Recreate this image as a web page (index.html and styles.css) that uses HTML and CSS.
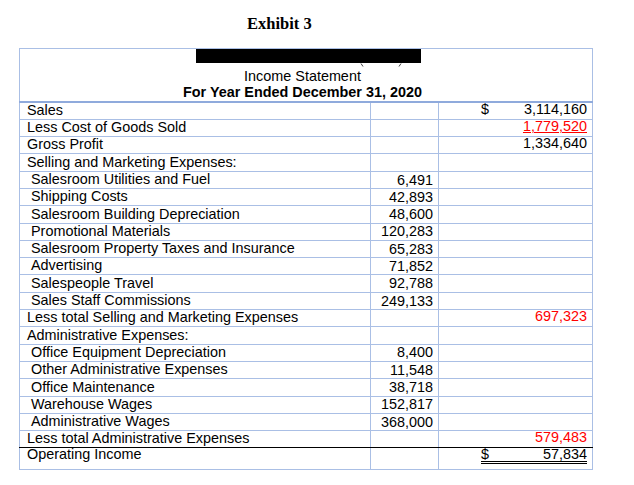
FILE: index.html
```html
<!DOCTYPE html>
<html lang="en">
<head>
<meta charset="utf-8">
<title>Exhibit 3</title>
<link rel="stylesheet" href="styles.css">
</head>
<body>
<h1 class="exhibit">Exhibit 3</h1>
<table class="sheet">
  <colgroup><col class="c1"><col class="c2"><col class="c3"></colgroup>
  <tr class="head">
    <td colspan="3">
      <div class="redact"></div>
      <svg class="remnant" width="225" height="5" viewBox="0 0 225 5"><path d="M165 0.5 L167 3.5 M205 0.5 L203 3.5" stroke="#444" stroke-width="1" fill="none"/></svg>
      <div class="title">Income Statement</div>
      <div class="title bold">For Year Ended December 31, 2020</div>
    </td>
  </tr>
  <tr><td class="lbl">Sales</td><td></td><td class="tot"><span class="acc"><span>$</span><span>3,114,160</span></span></td></tr>
  <tr><td class="lbl">Less Cost of Goods Sold</td><td></td><td class="tot"><span class="red under">1,779,520</span></td></tr>
  <tr><td class="lbl">Gross Profit</td><td></td><td class="tot">1,334,640</td></tr>
  <tr><td class="lbl">Selling and Marketing Expenses:</td><td></td><td></td></tr>
  <tr><td class="lbl ind">Salesroom Utilities and Fuel</td><td class="num">6,491</td><td></td></tr>
  <tr><td class="lbl ind">Shipping Costs</td><td class="num">42,893</td><td></td></tr>
  <tr><td class="lbl ind">Salesroom Building Depreciation</td><td class="num">48,600</td><td></td></tr>
  <tr><td class="lbl ind">Promotional Materials</td><td class="num">120,283</td><td></td></tr>
  <tr><td class="lbl ind">Salesroom Property Taxes and Insurance</td><td class="num">65,283</td><td></td></tr>
  <tr><td class="lbl ind">Advertising</td><td class="num">71,852</td><td></td></tr>
  <tr><td class="lbl ind">Salespeople Travel</td><td class="num">92,788</td><td></td></tr>
  <tr><td class="lbl ind">Sales Staff Commissions</td><td class="num">249,133</td><td></td></tr>
  <tr><td class="lbl">Less total Selling and Marketing Expenses</td><td></td><td class="tot red">697,323</td></tr>
  <tr><td class="lbl">Administrative Expenses:</td><td></td><td></td></tr>
  <tr><td class="lbl ind">Office Equipment Depreciation</td><td class="num">8,400</td><td></td></tr>
  <tr><td class="lbl ind">Other Administrative Expenses</td><td class="num">11,548</td><td></td></tr>
  <tr><td class="lbl ind">Office Maintenance</td><td class="num">38,718</td><td></td></tr>
  <tr><td class="lbl ind">Warehouse Wages</td><td class="num">152,817</td><td></td></tr>
  <tr><td class="lbl ind">Administrative Wages</td><td class="num">368,000</td><td></td></tr>
  <tr class="sep"><td class="lbl">Less total Administrative Expenses</td><td></td><td class="tot red">579,483</td></tr>
  <tr class="final"><td class="lbl fin-l">Operating Income</td><td class="fin-m"></td><td class="tot fin-r"><span class="acc dbl"><span>$</span><span>57,834</span></span></td></tr>
</table>
</body>
</html>
```
FILE: styles.css
```css
body {
  margin: 0;
  background: #fff;
  color: #000;
  font-family: "Liberation Sans", Arial, sans-serif;
}

.exhibit {
  margin: 0;
  padding: 14px 0 0 247px;
  font: bold 16.5px/20px "Liberation Serif", "Times New Roman", serif;
}

.sheet {
  margin: 14px 0 0 19px;
  border-collapse: collapse;
  table-layout: fixed;
  width: 574px;
  font-size: 14.4px;
}

.c1 { width: 351px; }
.c2 { width: 68px; }
.c3 { width: 154px; }

.sheet tr { height: 17.3px; }

.sheet td {
  border: 1px solid #aabfe5;
  padding: 0;
  line-height: 13px;
  vertical-align: bottom;
  white-space: nowrap;
}

.sheet .head td {
  border-bottom: 2px solid #8faadc;
  vertical-align: top;
}

.redact {
  width: 225px;
  height: 14px;
  margin-left: 176px;
  background: #000;
}

.remnant {
  display: block;
  margin-left: 176px;
}

.title {
  line-height: 16.4px;
  text-align: center;
  padding-right: 7px;
}

.bold { font-weight: bold; }

.sheet .lbl { padding: 0 0 2px 7px; }
.sheet .lbl.ind { padding-left: 11px; }

.sheet .num {
  text-align: right;
  padding: 0 5px 1.5px 0;
}

.sheet .tot {
  text-align: right;
  padding: 0 5px 3px 0;
}

.acc {
  display: flex;
  justify-content: space-between;
  margin-left: 42px;
}

.red { color: #ff0000; }

.under {
  text-decoration: underline;
  text-decoration-thickness: 1px;
}

.sheet .sep td { border-bottom: 1px solid #000; }

.sheet .final td {
  vertical-align: top;
  border-top: 1px solid #000;
}
.sheet .final .fin-l { padding-bottom: 8px; }
.sheet .final .fin-m { padding-bottom: 8px; }
.sheet .final .fin-r { padding-bottom: 5px; }

.dbl {
  line-height: 13px;
  border-bottom: 3px double #000;
}
```
